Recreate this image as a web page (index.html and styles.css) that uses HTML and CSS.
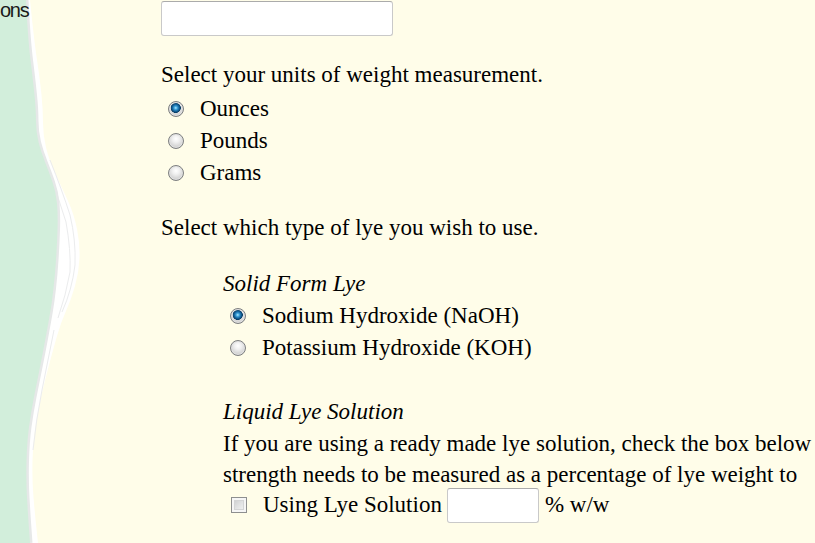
FILE: index.html
```html
<!DOCTYPE html>
<html>
<head>
<meta charset="utf-8">
<link rel="stylesheet" href="styles.css">
</head>
<body>
<svg class="backdrop" width="120" height="543" viewBox="0 0 120 543">
  <path class="band" d="M30,0 Q34,40 37,60 Q40,80 41.5,95 Q43,110 43,122.5 Q43,135 46,147.5 Q49,160 55.5,174 Q62,188 68,201 Q74,214 77,229 Q80,244 79.5,258 Q79,272 75,286 Q71,300 66,311 Q61,322 57,336 Q53,350 49,365 Q45,380 41.5,395 Q38,410 35.5,426 Q33,442 32.5,461 Q32,480 33.5,497.5 Q35,515 36.5,529 L38,543 L0,543 L0,0 Z"/>
  <path class="streak" d="M50,160 Q62,190 70,215 Q76,240 75,265 Q72,290 62,312"/>
  <path class="streak" d="M46,165 Q58,195 66,222 Q71,250 70,272 Q66,295 58,318"/>
  <path class="streak" d="M54,330 Q48,360 42,390 Q36,420 33,450"/>
  <path class="shade" d="M26,0 Q28,40 30.5,60 Q33,80 34.5,95 Q36,110 36,121 Q36,132 38.5,142 Q41,152 45,162 Q49,172 52.5,182 Q56,192 57,203.5 Q58,215 57.5,230 Q57,245 56,260 Q55,275 53.5,288.5 Q52,302 50,313.5 Q48,325 45.5,338.5 Q43,352 40,367 Q37,382 34,397 Q31,412 29,427 Q27,442 26.5,461 Q26,480 27,497.5 Q28,515 29,529 L30,543"/>
  <path class="green" d="M26,0 Q28,40 30.5,60 Q33,80 34.5,95 Q36,110 36,121 Q36,132 38.5,142 Q41,152 45,162 Q49,172 52.5,182 Q56,192 57,203.5 Q58,215 57.5,230 Q57,245 56,260 Q55,275 53.5,288.5 Q52,302 50,313.5 Q48,325 45.5,338.5 Q43,352 40,367 Q37,382 34,397 Q31,412 29,427 Q27,442 26.5,461 Q26,480 27,497.5 Q28,515 29,529 L30,543 L0,543 L0,0 Z"/>
</svg>
<div class="page">
  <div class="label">ons</div>
  <div class="form">
    <input class="field wide" type="text">
    <p class="question">Select your units of weight measurement.</p>
    <div class="options">
      <label class="opt"><input class="radio" type="radio" name="units" checked><span>Ounces</span></label>
      <label class="opt"><input class="radio" type="radio" name="units"><span>Pounds</span></label>
      <label class="opt"><input class="radio" type="radio" name="units"><span>Grams</span></label>
    </div>
    <p class="question">Select which type of lye you wish to use.</p>
    <div class="sub">
      <div class="heading">Solid Form Lye</div>
      <label class="opt"><input class="radio" type="radio" name="lye" checked><span>Sodium Hydroxide (NaOH)</span></label>
      <label class="opt"><input class="radio" type="radio" name="lye"><span>Potassium Hydroxide (KOH)</span></label>
      <div class="heading spaced">Liquid Lye Solution</div>
      <p class="note"><span class="line">If you are using a ready made lye solution, check the box below</span><span class="line">strength needs to be measured as a percentage of lye weight to</span></p>
      <div class="opt solution">
        <input class="check" type="checkbox">
        <span>Using Lye Solution</span>
        <input class="field short" type="text">
        <span class="unit">% w/w</span>
      </div>
    </div>
  </div>
</div>
</body>
</html>
```
FILE: styles.css
```css
html, body {
  margin: 0;
  padding: 0;
  height: 100%;
  overflow: hidden;
}
body {
  background: #fffde9;
  font-family: "Liberation Serif", "Times New Roman", serif;
  font-size: 23px;
  line-height: 32px;
  color: #000;
  position: relative;
}
.backdrop {
  position: absolute;
  left: 0;
  top: 0;
  z-index: 0;
}
.backdrop .band { fill: #ffffff; }
.backdrop .green { fill: #d2eedb; }
.backdrop .shade {
  fill: none;
  stroke: #e6e8e8;
  stroke-width: 5;
}
.backdrop .streak {
  fill: none;
  stroke: #ebeced;
  stroke-width: 1;
}
.page {
  position: relative;
  z-index: 1;
  display: grid;
  grid-template-columns: 161px 1fr;
}
.label {
  font-family: "Liberation Sans", Arial, sans-serif;
  font-size: 20px;
  letter-spacing: -1.3px;
  line-height: 21px;
  color: #1a1a1a;
  white-space: nowrap;
}
.form {
  display: flex;
  flex-direction: column;
  align-items: flex-start;
  white-space: nowrap;
}
.field {
  box-sizing: border-box;
  height: 35px;
  margin: 0;
  background: #fff;
  border: 1px solid #c9c9c9;
  border-top-color: #ababab;
  border-radius: 3px;
  font: inherit;
}
.wide {
  width: 232px;
  margin-top: 1px;
}
.question {
  margin: 23px 0 0;
}
.options {
  margin-top: 2px;
}
.opt {
  display: flex;
  align-items: center;
  gap: 16px;
  height: 32px;
  padding-left: 7px;
}
.sub {
  margin-left: 62px;
  margin-top: 24px;
}
.heading {
  font-style: italic;
}
.heading.spaced {
  margin-top: 32px;
}
.note {
  margin: 0;
  line-height: 31px;
}
.line {
  display: block;
}
.solution {
  height: 36px;
  margin-top: -3px;
}
.solution .short {
  width: 92px;
  margin-left: -11px;
}
.unit { margin-left: -10px; }
.radio {
  appearance: none;
  -webkit-appearance: none;
  width: 16px;
  height: 16px;
  min-width: 16px;
  margin: 0;
  box-sizing: border-box;
  border-radius: 50%;
  border: 1px solid #7d7f80;
  background: radial-gradient(circle at 50% 35%, #ffffff 0, #f0f0f0 30%, #cdcdcd 75%, #b4b4b4 100%);
  box-shadow: inset 0 0 0 1px #e2e2e2;
  flex: none;
}
.radio:checked {
  background:
    radial-gradient(circle at 48% 42%, #b5ecff 0, #45a8de 1.5px, #1a70aa 3px, #0c4a78 4.3px, #0a3d64 4.8px, rgba(10,61,100,0) 5.3px),
    radial-gradient(circle at 50% 35%, #ffffff 0, #f0f0f0 30%, #cdcdcd 75%, #b4b4b4 100%);
}
.check {
  appearance: none;
  -webkit-appearance: none;
  width: 16px;
  height: 16px;
  margin: 0 0 0 1px;
  box-sizing: border-box;
  border: 1px solid #8e8f8f;
  background: linear-gradient(135deg, #c4c5c7 0, #e1e2e3 50%, #f8f8f8 100%);
  box-shadow: inset 0 0 0 2px #f6f6f6, inset 0 0 0 3px #d4d5d6;
  flex: none;
}
```
